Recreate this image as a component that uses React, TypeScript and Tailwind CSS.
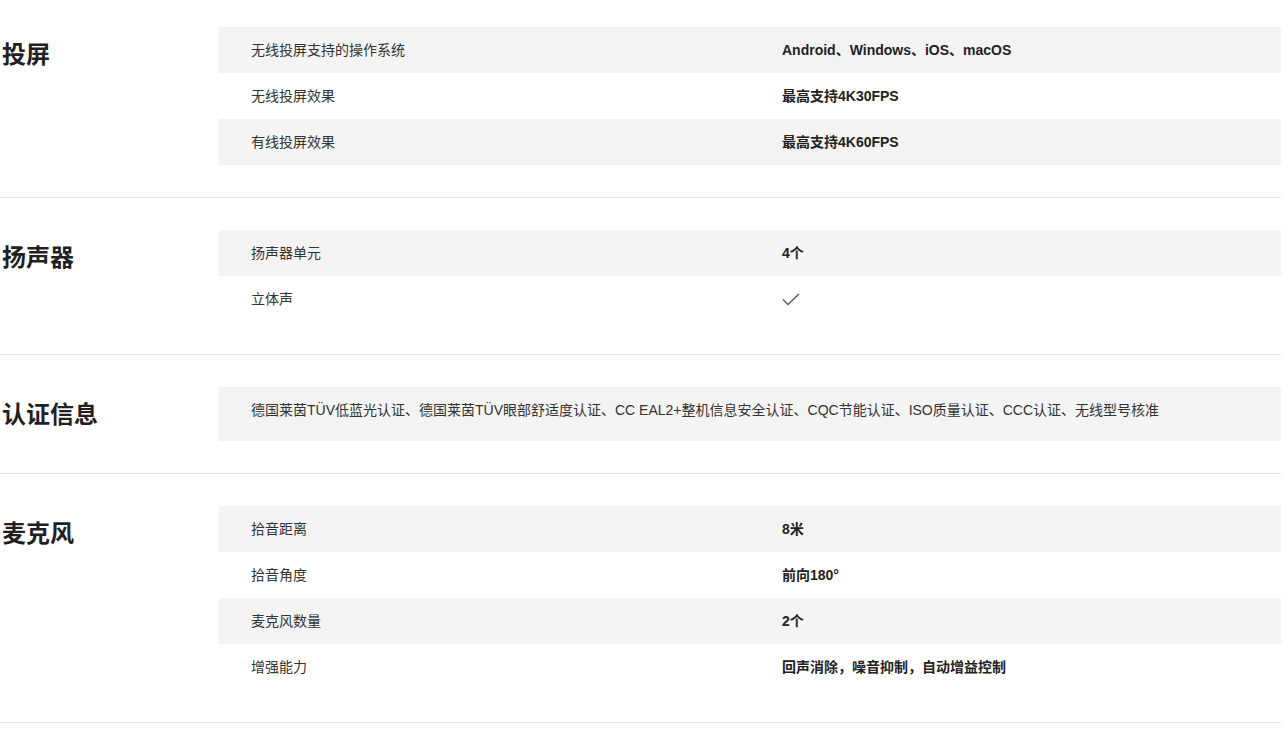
import React from "react";

type Row = { label: string; value?: string; check?: boolean };
type Section = { title: string; rows?: Row[]; note?: string };

const sections: Section[] = [
  {
    title: "投屏",
    rows: [
      { label: "无线投屏支持的操作系统", value: "Android、Windows、iOS、macOS" },
      { label: "无线投屏效果", value: "最高支持4K30FPS" },
      { label: "有线投屏效果", value: "最高支持4K60FPS" },
    ],
  },
  {
    title: "扬声器",
    rows: [
      { label: "扬声器单元", value: "4个" },
      { label: "立体声", check: true },
    ],
  },
  {
    title: "认证信息",
    note: "德国莱茵TÜV低蓝光认证、德国莱茵TÜV眼部舒适度认证、CC EAL2+整机信息安全认证、CQC节能认证、ISO质量认证、CCC认证、无线型号核准",
  },
  {
    title: "麦克风",
    rows: [
      { label: "拾音距离", value: "8米" },
      { label: "拾音角度", value: "前向180°" },
      { label: "麦克风数量", value: "2个" },
      { label: "增强能力", value: "回声消除，噪音抑制，自动增益控制" },
    ],
  },
];

const Check = () => (
  <svg width="18" height="13" viewBox="0 0 18 13" className="mt-[1px]">
    <path d="M1 6.5 L6 11.5 L17 1" fill="none" stroke="#5f6066" strokeWidth="1.6" />
  </svg>
);

const SpecSection: React.FC<{ s: Section; first: boolean }> = ({ s, first }) => (
  <section
    className={`flex border-b border-[#e3e3e3] pb-8 ${first ? "pt-[27px]" : "pt-[32px]"}`}
  >
    <h2 className="w-[219px] shrink-0 pl-[2px] pt-[12px] text-[24px] font-bold leading-[32px] text-[#1f1f24]">
      {s.title}
    </h2>
    <div className="flex-1">
      {s.rows &&
        s.rows.map((r, i) => (
          <div
            key={r.label}
            className={`grid h-[46px] grid-cols-2 items-center text-[14px] ${i % 2 === 0 ? "bg-[#f4f4f4]" : ""}`}
          >
            <div className="pl-8 text-[#333]">{r.label}</div>
            <div className="pl-8 font-bold text-[#222]">
              {r.check ? <Check /> : r.value}
            </div>
          </div>
        ))}
      {s.note && (
        <div className="h-[54px] bg-[#f4f4f4] pl-8 pt-[13px] text-[14px] leading-[20px] text-[#333]">
          {s.note}
        </div>
      )}
    </div>
  </section>
);

export default function App() {
  return (
    <div
      className="w-[1281px] bg-white"
      style={{ fontFamily: '"Liberation Sans", "Noto Sans CJK SC", sans-serif' }}
    >
      {sections.map((s, i) => (
        <SpecSection key={s.title} s={s} first={i === 0} />
      ))}
    </div>
  );
}
